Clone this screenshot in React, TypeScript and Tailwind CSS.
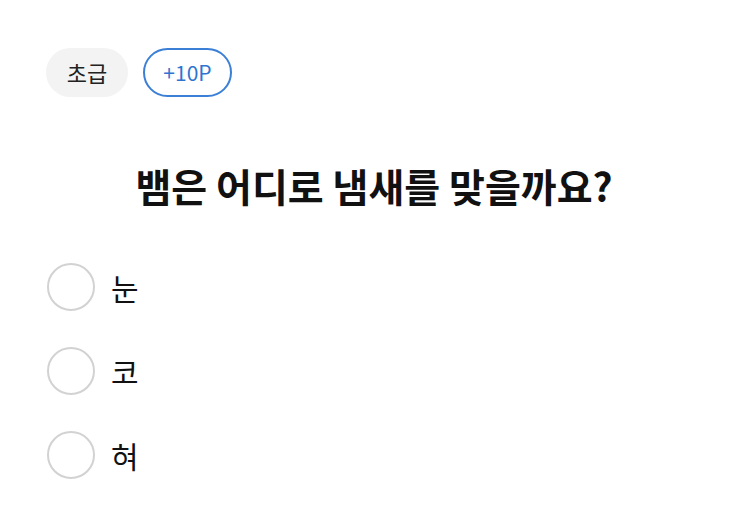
import React from "react";

export default function App() {
  const options = ["눈", "코", "혀"];
  return (
    <div
      className="w-[743px] h-[522px] bg-white overflow-hidden"
      style={{ fontFamily: '"Noto Sans CJK KR", "Noto Sans", sans-serif' }}
    >
      <div className="flex gap-[15px] pl-[46px] pt-[48px]">
        <div className="h-[49px] w-[82px] rounded-full bg-[#f3f3f3] flex items-center justify-center text-[22px] text-[#222]">
          초급
        </div>
        <div className="h-[49px] w-[89px] rounded-full border-2 border-[#3b7fd6] flex items-center justify-center text-[21px] text-[#2f74cf]">
          +10P
        </div>
      </div>
      <div className="mt-[62px] text-center text-[39px] font-bold text-[#111] leading-[52px] pl-[5px]">
        뱀은 어디로 냄새를 맞을까요?
      </div>
      <div className="mt-[52px] pl-[47px] flex flex-col gap-[36px]">
        {options.map((o) => (
          <div key={o} className="flex items-center gap-[16px] h-[48px]">
            <div className="w-[48px] h-[48px] rounded-full border-2 border-[#d2d2d2] bg-white" />
            <span className="text-[30px] text-[#111]">{o}</span>
          </div>
        ))}
      </div>
    </div>
  );
}
